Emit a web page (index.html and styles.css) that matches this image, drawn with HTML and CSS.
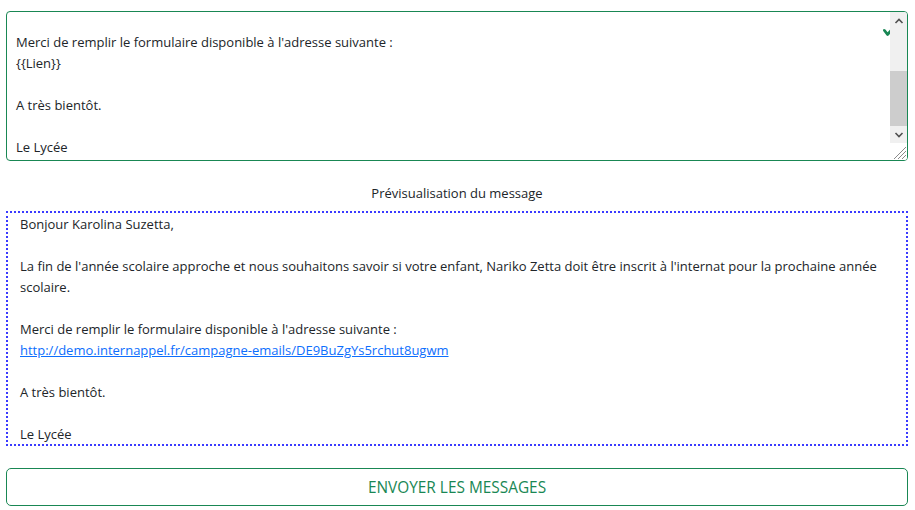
FILE: index.html
```html
<!DOCTYPE html>
<html lang="fr">
<head>
<meta charset="utf-8">
<title>Campagne emails</title>
<link rel="stylesheet" href="styles.css">
</head>
<body>
<div class="page">
  <div class="editor">
    <div class="editor-text">
      <div class="line">Merci de remplir le formulaire disponible à l'adresse suivante :</div>
      <div class="line">{{Lien}}</div>
      <div class="line">&nbsp;</div>
      <div class="line">A très bientôt.</div>
      <div class="line">&nbsp;</div>
      <div class="line">Le Lycée</div>
    </div>
    <svg class="valid-icon" viewBox="0 0 8 8" width="16" height="16"><path fill="#198754" d="M2.3 6.73.6 4.53c-.4-1.04.46-1.4 1.1-.8l1.1 1.4 3.4-3.8c.6-.63 1.6-.27 1.2.7l-4 4.6c-.43.5-.8.4-1.1.1z"/></svg>
    <div class="scrollbar">
      <div class="sb-btn"><svg viewBox="0 0 16 16" width="16" height="16"><path d="M4.5 10 8 6.5 11.5 10" fill="none" stroke="#505050" stroke-width="1.6"/></svg></div>
      <div class="sb-track"><div class="sb-thumb"></div></div>
      <div class="sb-btn"><svg viewBox="0 0 16 16" width="16" height="16"><path d="M4.5 6 8 9.5 11.5 6" fill="none" stroke="#505050" stroke-width="1.6"/></svg></div>
      <div class="sb-corner"><svg viewBox="0 0 16 16" width="16" height="16"><path d="M15 3 3 15M15 7 7 15M15 11 11 15" stroke="#8a8a8a" stroke-width="1"/></svg></div>
    </div>
  </div>

  <div class="preview-label">Prévisualisation du message</div>

  <div class="preview">
    <div class="line">Bonjour Karolina Suzetta,</div>
    <div class="line">&nbsp;</div>
    <div class="line">La fin de l'année scolaire approche et nous souhaitons savoir si votre enfant, Nariko Zetta doit être inscrit à l'internat pour la prochaine année</div>
    <div class="line">scolaire.</div>
    <div class="line">&nbsp;</div>
    <div class="line">Merci de remplir le formulaire disponible à l'adresse suivante :</div>
    <div class="line"><a class="link" href="#">http://demo.internappel.fr/campagne-emails/DE9BuZgYs5rchut8ugwm</a></div>
    <div class="line">&nbsp;</div>
    <div class="line">A très bientôt.</div>
    <div class="line">&nbsp;</div>
    <div class="line">Le Lycée</div>
  </div>

  <button class="send-btn" type="button">ENVOYER LES MESSAGES</button>
</div>
</body>
</html>
```

FILE: styles.css
```css
* { box-sizing: border-box; }

html, body {
  margin: 0;
  padding: 0;
  background: #ffffff;
}

body {
  font-family: "Open Sans", "Noto Sans", sans-serif;
  font-size: 13px;
  color: #212529;
}

.page {
  width: 902px;
  margin-left: 6px;
  padding-top: 11px;
  display: flex;
  flex-direction: column;
}

.line {
  line-height: 21px;
  white-space: nowrap;
}

.editor {
  position: relative;
  height: 150px;
  border: 1px solid #198754;
  border-radius: 4px;
  display: flex;
  overflow: hidden;
}

.editor-text {
  flex: 1;
  padding: 20px 9px 0 9px;
}

.valid-icon {
  position: absolute;
  left: 875px;
  top: 10px;
}

.scrollbar {
  position: relative;
  z-index: 1;
  width: 17px;
  display: flex;
  flex-direction: column;
  background: #f0f0f0;
}

.sb-btn {
  height: 17px;
  display: flex;
  align-items: center;
  justify-content: center;
}

.sb-track {
  flex: 1;
  padding-top: 42px;
}

.sb-thumb {
  height: 55px;
  background: #cdcdcd;
}

.sb-corner {
  height: 17px;
  background: #ffffff;
  display: flex;
  align-items: flex-end;
  justify-content: flex-end;
}

.preview-label {
  margin-top: 22px;
  margin-bottom: 7px;
  line-height: 21px;
  text-align: center;
}

.preview {
  height: 235px;
  border: 2px dotted #3b3bff;
  padding: 1px 12px 0 12px;
  overflow: hidden;
}

.link {
  color: #0d6efd;
  text-decoration: underline;
}

.send-btn {
  margin-top: 22px;
  height: 38px;
  width: 100%;
  border: 1px solid #198754;
  border-radius: 5px;
  background: #ffffff;
  color: #198754;
  font-family: "Open Sans", "Noto Sans", sans-serif;
  font-size: 15.4px;
  line-height: 24px;
  padding: 7px 12px 5px 12px;
  text-align: center;
}
```
